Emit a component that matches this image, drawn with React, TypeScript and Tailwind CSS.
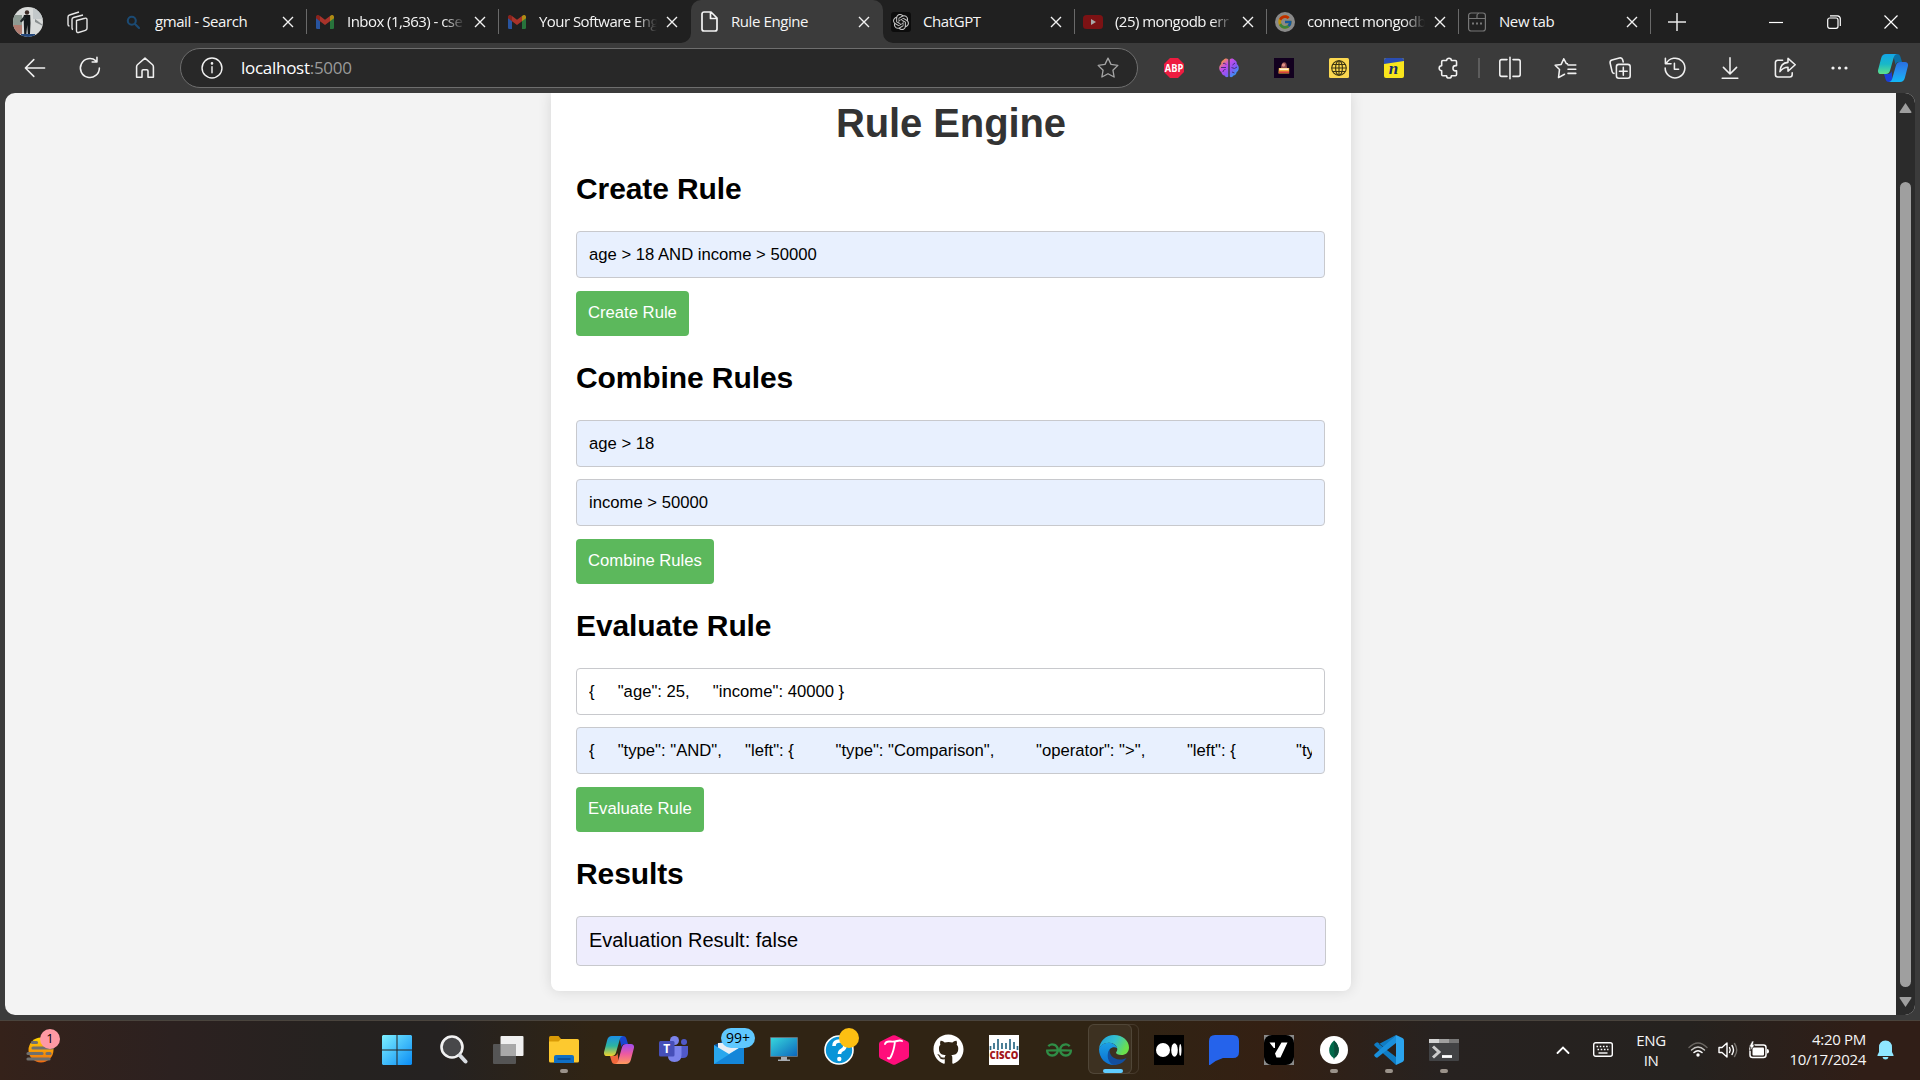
import React from "react";
import { FaGithub } from "react-icons/fa";
import { FcGoogle } from "react-icons/fc";
import { SiOpenai, SiGeeksforgeeks } from "react-icons/si";

type Kids = { children?: React.ReactNode };

/* ---------- shared drawing helper ---------- */
function Line({ size = 24, sw = 1.3, children, color = "#f0f0f0" }: Kids & { size?: number; sw?: number; color?: string }) {
  return (
    <svg width={size} height={size} viewBox="0 0 20 20" fill="none" stroke={color} strokeWidth={sw} strokeLinecap="round" strokeLinejoin="round" className="shrink-0">
      {children}
    </svg>
  );
}

/* ---------- tab strip ---------- */
function Gmail() {
  return (
    <svg width="18" height="14" viewBox="0 0 18 14">
      <path d="M0 1.5 4 4.5V14H1.2A1.2 1.2 0 0 1 0 12.8Z" fill="#28549f" />
      <path d="M18 1.5 14 4.5V14h2.8a1.2 1.2 0 0 0 1.2-1.2Z" fill="#28733c" />
      <path d="M4 1v5.2L9 10l5-3.8V1L9 4.8Z" fill="#a8332a" />
      <path d="M0 2C0 .2 1.8-.6 3.2.4L4 1v5.2L0 3.2Z" fill="#8a231c" />
      <path d="M18 2c0-1.8-1.8-2.6-3.2-1.6L14 1v5.2l4-3Z" fill="#b08a14" />
    </svg>
  );
}

const tabs: { title: string; icon: React.ReactNode; active?: boolean; sep?: boolean }[] = [
  {
    title: "gmail - Search",
    sep: true,
    icon: (
      <Line size={16} sw={2.6} color="#1b4a73">
        <circle cx="8.5" cy="8.5" r="5" />
        <path d="m12.5 12.5 5 5" />
      </Line>
    ),
  },
  { title: "Inbox (1,363) - cse", sep: true, icon: <Gmail /> },
  { title: "Your Software Eng", icon: <Gmail /> },
  {
    title: "Rule Engine",
    active: true,
    icon: (
      <svg width="17" height="21" viewBox="0 0 17 21" fill="none" stroke="#f4f4f4" strokeWidth="1.7" strokeLinejoin="round">
        <path d="M3 1h7l6 6v11a2 2 0 0 1-2 2H3a2 2 0 0 1-2-2V3a2 2 0 0 1 2-2ZM9.5 1v6.5H16" />
      </svg>
    ),
  },
  {
    title: "ChatGPT",
    sep: true,
    icon: (
      <span className="flex size-5 items-center justify-center rounded-[3px] bg-[#0c0c0c]">
        <SiOpenai size={16} color="#c4c4c4" />
      </span>
    ),
  },
  {
    title: "(25) mongodb err",
    sep: true,
    icon: (
      <svg width="20" height="14" viewBox="0 0 20 14">
        <rect width="20" height="14" rx="3.5" fill="#7c1214" />
        <path d="M8 4v6l5-3Z" fill="#a9a9a9" />
      </svg>
    ),
  },
  {
    title: "connect mongodb",
    sep: true,
    icon: (
      <span className="flex size-5 items-center justify-center rounded-full bg-[#8a8a8a]">
        <FcGoogle size={16} className="brightness-75" />
      </span>
    ),
  },
  {
    title: "New tab",
    sep: true,
    icon: (
      <svg width="18" height="20" viewBox="0 0 18 20" fill="none" stroke="#777" strokeWidth="1.2">
        <rect x=".6" y="1" width="16.8" height="18" rx="2.5" />
        <path d="M.6 6.500h8.400V3.500a2 2 0 0 1 2-2M9 6.500h8" />
        <path d="M4 11.500h2M8 11.500h2M12 11.500h2" strokeWidth="1.8" />
      </svg>
    ),
  },
];

function Tab({ title, icon, active, sep }: (typeof tabs)[number]) {
  return (
    <div className={"relative flex h-[43px] w-[192px] shrink-0 items-center " + (active ? "rounded-t-[10px] bg-[#3b3b3b]" : "")}>
      <div className="ml-[7px] flex w-[22px] shrink-0 items-center justify-center">{icon}</div>
      <div
        className={
          "ml-[11px] w-[118px] overflow-hidden whitespace-nowrap pb-[2px] text-[15px] leading-5 text-[#f5f5f5] " +
          (title.length > 14 ? "tracking-[-0.55px] [mask-image:linear-gradient(to_right,black_82%,transparent)]" : "tracking-[-0.42px]")
        }
      >
        {title}
      </div>
      <svg width="12" height="12" viewBox="0 0 12 12" stroke="#f2f2f2" strokeWidth="1.4" className="ml-[9px] shrink-0">
        <path d="m1 1 10 10M11 1 1 11" />
      </svg>
      {sep && <span className="absolute right-0 top-[9px] h-[25px] w-px bg-[#6a6a6a]" />}
      {active && (
        <>
          <svg width="10" height="10" className="absolute -left-[10px] bottom-0"><path d="M10 0v10H0A10 10 0 0 0 10 0" fill="#3b3b3b" /></svg>
          <svg width="10" height="10" className="absolute -right-[10px] bottom-0"><path d="M0 0v10h10A10 10 0 0 1 0 0" fill="#3b3b3b" /></svg>
        </>
      )}
    </div>
  );
}

function TabStrip() {
  return (
    <div className="flex h-[43px] items-center bg-[#202020]">
      <div className="flex w-[55px] shrink-0 justify-center">
        <svg width="30" height="30" viewBox="0 0 30 30">
          <defs><clipPath id="face"><circle cx="15" cy="15" r="15" /></clipPath></defs>
          <g clipPath="url(#face)">
            <rect width="30" height="30" fill="#d9dbda" />
            <path d="M0 8h9v12H0Z" fill="#8d9a92" />
            <path d="M0 18h9v9H0Z" fill="#b07c70" />
            <path d="M20 0h10v12H20Z" fill="#c3c8ca" />
            <path d="M22 12 30 18v1l-8-4Z" fill="#8a8f90" />
            <path d="M8 27h14v3H8Z" fill="#23477c" />
            <circle cx="14" cy="5.5" r="2.2" fill="#3b2b26" />
            <path d="M10.8 8h6.4l.3 8-.5 11h-2.200l-.6-9-.8 9h-2.200l-.4-11Z" fill="#15191b" />
            <path d="m11 9-4 5 1 1.500 5-4Z" fill="#20282a" />
          </g>
        </svg>
      </div>
      <div className="flex w-[60px] shrink-0 pl-[11px]">
        <svg width="24" height="24" viewBox="0 0 24 24" fill="none" stroke="#e6e6e6" strokeWidth="1.4" strokeLinejoin="round">
          <path d="m10.5 10.5 8.5-2.3a1.5 1.5 0 0 1 2 1.4v8.7a2 2 0 0 1-1.5 2l-7 2.2a1.5 1.5 0 0 1-2-1.4Z" />
          <path d="M7 19.5a1.5 1.5 0 0 1-1-1.5V9.5a2 2 0 0 1 1.500-2L17 5M3.5 16a1.5 1.5 0 0 1-1.500-1.500V7a2 2 0 0 1 1.500-2L13 2" />
        </svg>
      </div>
      {tabs.map((t) => <Tab key={t.title} {...t} />)}
      <div className="flex w-[105px] shrink-0 pl-[17px]">
        <svg width="18" height="18" stroke="#e8e8e8" strokeWidth="1.5"><path d="M9 0v18M0 9h18" /></svg>
      </div>
      <div className="flex flex-1 items-center justify-between pl-[13px] pr-[22px]">
        <svg width="14" height="14" stroke="#fff" strokeWidth="1.2"><path d="M0 7.5h14" /></svg>
        <svg width="14" height="14" fill="none" stroke="#fff" strokeWidth="1.2"><rect x=".7" y="3" width="10.3" height="10.3" rx="2" /><path d="M3 .8h7.500a3 3 0 0 1 2.800 2.800V11" /></svg>
        <svg width="14" height="14" stroke="#fff" strokeWidth="1.2"><path d="m.5.5 13 13M13.5.5l-13 13" /></svg>
      </div>
    </div>
  );
}

/* ---------- toolbar ---------- */
function Cell({ children }: Kids) {
  return <div className="flex w-[55px] shrink-0 items-center justify-center">{children}</div>;
}

function Toolbar() {
  return (
    <div className="flex h-[50px] items-center bg-[#3b3b3b] pl-[7px]">
      <Cell><Line><path d="M18 10H2.3M9 3l-7 7 7 7" /></Line></Cell>
      <Cell><Line><path d="M17.8 10a7.900 7.900 0 1 1-2.800-6M15.800 1v4h-4" /></Line></Cell>
      <Cell><Line><path d="M3 9c0-.8.3-1.400.9-1.900L10 1.800l6.100 5.300c.6.5.9 1.100.9 1.900v8.700h-4.500V12.500a1 1 0 0 0-1-1h-3a1 1 0 0 0-1 1v5.200H3Z" /></Line></Cell>
      <div className="ml-[8px] flex h-10 w-[958px] shrink-0 items-center rounded-full border border-[#6e6e6e] bg-[#282828] pl-[19px] pr-[17px]">
        <Line size={24} sw={1.2}><circle cx="10" cy="10" r="8.3" /><path d="M10 9v5" /><circle cx="10" cy="6.2" r=".5" fill="#fff" /></Line>
        <div className="ml-[17px] flex-1 text-[17px] leading-6 tracking-[-0.28px] text-white">localhost<span className="text-[#9a9a9a]">:5000</span></div>
        <Line size={24} sw={1.1} color="#a5a5a5"><path d="m10 1.800 2.500 5.200 5.700.8-4.100 4 1 5.700L10 14.800l-5.100 2.700 1-5.700-4.100-4 5.700-.8Z" /></Line>
      </div>
      <div className="ml-[8px] flex items-center">
        <Cell>
          <svg width="20" height="20" viewBox="0 0 20 20"><path d="M6 0h8l6 6v8l-6 6H6l-6-6V6Z" fill="#ee1c40" /><text x="10" y="14" textAnchor="middle" fontSize="11" fontWeight="700" fill="#fff" textLength="18.5" lengthAdjust="spacingAndGlyphs">ABP</text></svg>
        </Cell>
        <Cell>
          <svg width="20" height="20" viewBox="0 0 20 20">
            <defs><linearGradient id="brain" x1="0" y1="0" x2="1" y2="1"><stop offset=".1" stopColor="#ff9f2e" /><stop offset=".35" stopColor="#c44ee8" /><stop offset=".6" stopColor="#8b55f5" /><stop offset=".9" stopColor="#22a6f5" /></linearGradient></defs>
            <path d="M9.3 1.500C8 0 5.500.3 4.500 2 2.500 2.800 2 4.500 2.200 6 .5 7 0 9 .3 11c.3 1.600 1 2.500 2 3 .2 2 1.700 3.300 3.200 3.500 1 1.800 2.800 2.300 3.800 1Zm1.400 0c1.300-1.500 3.800-1.200 4.800.5 2 .8 2.500 2.500 2.300 4 1.700 1 2.200 3 1.900 5-.3 1.600-1 2.500-2 3-.2 2-1.700 3.300-3.200 3.500-1 1.800-2.800 2.300-3.800 1Z" fill="url(#brain)" />
            <path d="M4 5.500c1.500-.5 2.500 0 3 1M2 9.500h5M4 14c0-1.500 1-2.500 2.500-2.500M16 5l-2.500 2M12.500 9.500l3 1 2.500-1.500M13 14l2.500 1" fill="none" stroke="#4b2a80" strokeWidth="1" />
          </svg>
        </Cell>
        <Cell>
          <svg width="20" height="20"><rect width="20" height="20" fill="#12001f" /><path d="M7 10q0-4 2-5.500 3-1 3.500 1.500l.5 4Z" fill="#8b4a4e" /><circle cx="9.500" cy="7" r="1.7" fill="#df8f86" /><path d="M4.800 10h10.400v5.500H4.500Z" fill="#f2b43c" /><path d="M5 13.500h10v1.300H5Z" fill="#d0233d" /><path d="M5.500 10.500h9v1.300h-9Z" fill="#fff" /></svg>
        </Cell>
        <Cell>
          <svg width="20" height="20" fill="none" stroke="#3d3612" strokeWidth="1.1"><rect width="20" height="20" rx="1.5" fill="#fbd850" stroke="none" /><circle cx="10" cy="10" r="7.3" /><ellipse cx="10" cy="10" rx="3.4" ry="7.3" /><path d="M10 2.700v14.600M2.700 10h14.600M3.500 6.500h13M3.500 13.500h13" /></svg>
        </Cell>
        <Cell>
          <svg width="20" height="20"><rect width="20" height="20" rx="2" fill="#f9e51c" /><path d="M2 0h16a2 2 0 0 1 2 2v1L0 6V2a2 2 0 0 1 2-2Z" fill="#2a4db2" /><text x="9.500" y="15.500" textAnchor="middle" fontSize="17" fontStyle="italic" fontWeight="700" fill="#152a6d" className="font-['Liberation_Serif',serif]">n</text></svg>
        </Cell>
        <Cell><Line size={24}><path d="M8 3.800a2 2 0 0 1 4 0h3.300a1 1 0 0 1 1 1V8h-.8a2 2 0 0 0 0 4.400h.8v3a1 1 0 0 1-1 1H12a2 2 0 0 1-4 0H4.900a1 1 0 0 1-1-1V12.300a2.100 2.100 0 0 1 0-4.200V4.800a1 1 0 0 1 1-1Z" /></Line></Cell>
        <span className="ml-[2px] h-5 w-[2px] bg-[#5d5d5d]" />
        <div className="ml-[2px] flex">
          <Cell><Line size={24}><path d="M7.500 3H3a1.500 1.500 0 0 0-1.500 1.500v11A1.500 1.500 0 0 0 3 17h4.500M12.500 3H17a1.500 1.500 0 0 1 1.500 1.500v11A1.500 1.500 0 0 1 17 17h-4.500M10 1v18" /></Line></Cell>
          <Cell><Line size={24}><path d="m12 6.500-1-.3L9 2.300 6.800 7l-5 .7 3.600 3.600L4.600 18l5-2.800M12.500 7.500H19M12.500 11H19M12.500 14.500H19" /></Line></Cell>
          <Cell><Line size={24}><path d="M5 14.500c-.8 0-1.300-.5-1.500-1.300L1.800 6A2.200 2.200 0 0 1 3.300 3.400L9.500 1.700A2.200 2.200 0 0 1 12.200 3.200L12.700 5" /><rect x="7" y="7" width="11.5" height="11.5" rx="2" /><path d="M12.750 9.500v6.500M9.500 12.750H16" /></Line></Cell>
          <Cell><Line size={24}><path d="M2.600 6.500A8.200 8.200 0 1 1 1.800 10M2 1.800v4.700h4.700M9.500 6v5H13" /></Line></Cell>
          <Cell><Line size={24}><path d="M10 1.500v13M4.500 9.500 10 15l5.500-5.500M3.500 18.500h13" /></Line></Cell>
          <Cell><Line size={24}><path d="M8 3.500H4A2 2 0 0 0 2 5.500v10a2 2 0 0 0 2 2h10a2 2 0 0 0 2-2V14M12.500 2v3.300C8.500 5.500 6 8.500 5.800 13c1.700-2.500 3.700-3.700 6.700-3.700v3.400L18.500 7.300Z" /></Line></Cell>
          <Cell><svg width="17" height="4" fill="#f2f2f2"><circle cx="2" cy="2" r="1.6" /><circle cx="8.500" cy="2" r="1.6" /><circle cx="15" cy="2" r="1.6" /></svg></Cell>
        </div>
        <div className="flex w-[51px] shrink-0 justify-center"><Copilot blue /></div>
      </div>
    </div>
  );
}

function Copilot({ blue = false }: { blue?: boolean }) {
  const k = blue ? "b" : "c";
  return (
    <svg width="30" height="28" viewBox="0 0 30 28">
      <defs>
        <linearGradient id={k + "1"} x1="0" y1="0" x2="0" y2="1">
          <stop offset="0" stopColor={blue ? "#13a6e8" : "#1b8fe6"} />
          <stop offset=".5" stopColor={blue ? "#18b8c8" : "#2cb5a0"} />
          <stop offset="1" stopColor={blue ? "#5fe08a" : "#f4d32a"} />
        </linearGradient>
        <linearGradient id={k + "2"} x1="0" y1="0" x2="0" y2="1">
          <stop offset="0" stopColor={blue ? "#2870e0" : "#a04df0"} />
          <stop offset=".5" stopColor={blue ? "#2790ee" : "#ee5aa0"} />
          <stop offset="1" stopColor={blue ? "#12b8f5" : "#ff9a5c"} />
        </linearGradient>
      </defs>
      <path d="M15 0h4c2 0 3 1 3.500 3l1.500 5h-3c-2 0-3 1-3.500 3Z" fill={blue ? "#0b6fa5" : "#1846d0"} />
      <path d="M15 28h-4c-2 0-3-1-3.500-3L6 20h4c2 0 3-1 3.500-3Z" fill={blue ? "#1a3fd8" : "#f0683c"} />
      <path d="M8 0h11c-2 .5-2.800 1.800-3.400 4l-3.400 12c-.7 2.500-2 4-4.500 4H3c-2.500 0-3.500-2-2.800-4.500l3-11.500C3.900 1.500 5.500 0 8 0Z" fill={`url(#${k}1)`} />
      <path d="M22 28H11c2-.5 2.800-1.800 3.400-4l3.400-12c.7-2.500 2-4 4.500-4H27c2.500 0 3.500 2 2.800 4.500L26.800 24c-.7 2.500-2.300 4-4.800 4Z" fill={`url(#${k}2)`} />
    </svg>
  );
}

/* ---------- page ---------- */
function Field({ children, filled = true }: Kids & { filled?: boolean }) {
  return (
    <div className={"h-[47px] w-[749px] rounded-[4px] border border-[#c8c9cd] px-[12px] " + (filled ? "bg-[#e8f0fe]" : "bg-white")}>
      <div className="overflow-hidden whitespace-pre text-[16.67px] leading-[45px] text-black">{children}</div>
    </div>
  );
}

function Section({ title, action, children }: Kids & { title: string; action: string }) {
  return (
    <section className="mb-[25px]">
      <h2 className="text-[30px] font-bold leading-[34px] tracking-[-0.1px] text-black">{title}</h2>
      <div className="mt-[25px] flex flex-col items-start gap-3">
        {children}
        <button className="mt-px h-[45px] rounded-[4px] bg-[#5cb85c] px-[12px] pb-[3px] text-[16.67px] text-white">{action}</button>
      </div>
    </section>
  );
}

function Page() {
  return (
    <div className="flex h-[922px] w-[1910px] overflow-hidden rounded-[10px] bg-[#f3f3f3] font-['Liberation_Sans',Arial,sans-serif]">
      <div className="flex flex-1 items-start justify-center">
        <main className="ml-px h-[898px] w-[800px] rounded-b-[8px] bg-white px-[25px] pt-[8px] shadow-[0_0_14px_rgba(0,0,0,0.12)]">
          <h1 className="mb-[26.4px] text-center text-[40px] font-bold leading-[45px] tracking-[-0.1px] text-[#333]">Rule Engine</h1>
          <Section title="Create Rule" action="Create Rule">
            <Field>{"age > 18 AND income > 50000"}</Field>
          </Section>
          <Section title="Combine Rules" action="Combine Rules">
            <Field>{"age > 18"}</Field>
            <Field>{"income > 50000"}</Field>
          </Section>
          <Section title="Evaluate Rule" action="Evaluate Rule">
            <Field filled={false}>{'{     "age": 25,     "income": 40000 }'}</Field>
            <Field>{'{     "type": "AND",     "left": {         "type": "Comparison",         "operator": ">",         "left": {             "type": "Variable"'}</Field>
          </Section>
          <h2 className="text-[30px] font-bold leading-[34px] tracking-[-0.1px] text-black">Results</h2>
          <div className="mt-[25px] h-[50px] w-[750px] rounded-[4px] border border-[#c8c9cd] bg-[#eeedfd] px-[12px] text-[20px] leading-[46px] text-black">Evaluation Result: false</div>
        </main>
      </div>
      <div className="flex w-[19px] shrink-0 flex-col items-center bg-[#2b2b2b] pt-[10px]">
        <svg width="13" height="10" className="shrink-0"><path d="M6.500 0 12.500 9q.3 1-1 1H1.500Q.2 10 .5 9Z" fill="#9f9f9f" /></svg>
        <div className="mt-[69px] h-[805px] w-[11px] shrink-0 rounded-full bg-[#9f9f9f]" />
        <svg width="13" height="10" className="mt-[10px] shrink-0"><path d="M6.500 10 12.500 1q.3-1-1-1H1.500Q.2 0 .5 1Z" fill="#9f9f9f" /></svg>
      </div>
    </div>
  );
}

/* ---------- taskbar ---------- */
function TaskApp({ children, dot }: Kids & { dot?: boolean }) {
  return (
    <div className="relative flex h-[58px] w-[55px] shrink-0 items-center justify-center pb-px">
      {children}
      {dot && <span className="absolute bottom-[6px] left-[24px] h-1 w-2 rounded-full bg-[#9a928a]" />}
    </div>
  );
}

function Taskbar() {
  return (
    <div className="flex h-[60px] items-start border-t border-[#4a443d] bg-[linear-gradient(90deg,#35221a_0%,#2c2120_9%,#252220_18%,#252221_23%,#302414_31%,#302414_58%,#342013_66%,#272220_75%,#25221f_88%,#301e17_97%)]">
      <div className="relative h-[58px] w-[371px] shrink-0 pt-[11px]">
        <svg width="34" height="36" viewBox="0 0 34 36" className="ml-[26px]">
          <defs><linearGradient id="sun" x1="0" y1="0" x2="0" y2="1"><stop offset="0" stopColor="#ffd400" /><stop offset="1" stopColor="#f06a10" /></linearGradient></defs>
          <ellipse cx="15" cy="18" rx="12.5" ry="12.5" fill="url(#sun)" />
          <path d="M6.500 10.500h4M7 16h19M2 21.500h14M21 21.500h3M2 27h21" stroke="#70706e" strokeWidth="3.2" strokeLinecap="round" />
        </svg>
        <span className="absolute left-[40px] top-[8px] flex size-5 items-center justify-center rounded-full bg-[#ff99a4] text-[13px] text-black">1</span>
      </div>
      <TaskApp>
        <svg width="30" height="30" className="-translate-x-[2px]"><defs><linearGradient id="win" x1="0" y1="0" x2="1" y2="1"><stop offset="0" stopColor="#7df0ff" /><stop offset="1" stopColor="#0a8cf5" /></linearGradient></defs><path d="M1 0h13.500v14.500H0V1ZM15.500 0H29l1 1v13.500H15.500ZM0 15.500h14.500V30H1l-1-1ZM15.500 15.500H30V29l-1 1H15.500Z" fill="url(#win)" /></svg>
      </TaskApp>
      <TaskApp>
        <svg width="28" height="29" fill="none"><circle cx="12" cy="12" r="10.5" fill="#48484a" stroke="#f2f2f2" strokeWidth="2.6" /><path d="m20 20.500 5.500 6" stroke="#d9dde2" strokeWidth="4" strokeLinecap="round" /></svg>
      </TaskApp>
      <TaskApp>
        <svg width="31" height="28"><rect x="7.500" width="23" height="20" rx="1" fill="#f0f0f0" /><rect y="8" width="23" height="20" rx="1" fill="#555" /><path d="M7.500 8H23v12H7.500Z" fill="#a9a9a9" /></svg>
      </TaskApp>
      <TaskApp dot>
        <svg width="30" height="27"><path d="M0 1.500Q0 0 1.500 0h8L12 3v5H0Z" fill="#d99a06" /><path d="M0 5.500h9.500L12 3h16.500Q30 3 30 4.500V25q0 1.500-1.500 1.500h-27Q0 26.500 0 25Z" fill="#fdc92f" /><path d="M5 27v-6q0-2 2-2h16q2 0 2 2v6Z" fill="#0f6fc4" /><path d="M8.500 23h13" stroke="#07468c" strokeWidth="1.5" /></svg>
      </TaskApp>
      <TaskApp><Copilot /></TaskApp>
      <TaskApp>
        <svg width="30" height="27" viewBox="0 0 30 27"><circle cx="15.500" cy="4.500" r="4.5" fill="#7b83eb" /><circle cx="25" cy="6" r="3" fill="#5059c9" /><path d="M18 10h11v7q0 5-5 5h-6Z" fill="#5059c9" /><path d="M9 10h13.500v9q0 7-7 7T9 19Z" fill="#7b83eb" /><rect y="5" width="15.5" height="15.5" rx="1.5" fill="#464fb8" /><text x="7.75" y="17" textAnchor="middle" fontSize="12" fontWeight="700" fill="#fff">T</text></svg>
      </TaskApp>
      <TaskApp>
        <svg width="30" height="25" className="translate-y-[2px]"><path d="M0 6 15 0l15 6v6H0Z" fill="#0a5aa6" /><path d="M4 4h22v12H4Z" fill="#e8eef5" /><path d="M0 6l15 9 15-9v19H0Z" fill="#29a7ee" /><path d="M0 25 30 6v19Z" fill="#1486d9" /></svg>
        <span className="absolute left-[20px] top-[7px] flex h-5 w-[34px] items-center justify-center rounded-full bg-[#5fc8ff] text-[14px] leading-5 text-black">99+</span>
      </TaskApp>
      <TaskApp>
        <svg width="28" height="25"><defs><linearGradient id="pc" x1="0" y1="0" x2="1" y2="1"><stop offset="0" stopColor="#36d6dc" /><stop offset="1" stopColor="#0d67bd" /></linearGradient></defs><rect width="28" height="20" rx="1" fill="#657078" /><rect x="1" y="1" width="26" height="18" fill="url(#pc)" /><path d="M11 20h6v2.500h3V24H8v-1.500h3Z" fill="#a8adb2" /></svg>
      </TaskApp>
      <TaskApp>
        <svg width="30" height="30"><circle cx="15" cy="15" r="14" fill="#0a95d8" stroke="#fff" strokeWidth="1.6" /><path d="M10 11q0-5 5.500-5t5.500 4.500q0 3-3 4.500-2.500 1.200-2.500 4" fill="none" stroke="#fff" strokeWidth="3.6" /><circle cx="15.300" cy="24" r="2.2" fill="#fff" /></svg>
        <span className="absolute left-[28px] top-[7px] size-5 rounded-full bg-[#fdbf12]" />
      </TaskApp>
      <TaskApp>
        <svg width="30" height="30"><path d="M13.500.5q1.500-.7 3 0L28.500 6.500Q30 7.300 30 9v12q0 1.700-1.500 2.500L16.500 29.500q-1.500.7-3 0L1.500 23.500Q0 22.700 0 21V9q0-1.700 1.500-2.500Z" fill="#ff0d7b" /><path d="M6 9q1-3 5-2.500t7-.5 5 0M16 6.500q-1 9-4 15-1.500 3-3 1.500" fill="none" stroke="#fff" strokeWidth="1.9" strokeLinecap="round" /></svg>
      </TaskApp>
      <TaskApp><FaGithub size={31} color="#fff" /></TaskApp>
      <TaskApp>
        <svg width="30" height="30"><rect width="30" height="30" fill="#fff" /><path d="M1.500 11v4M5 8v6M9 4v11M13 8v6M17 8v6M21 4v11M25 7v7M28.500 11v4" stroke="#2c6a85" strokeWidth="1.7" /><text x="15" y="24.300" textAnchor="middle" fontSize="10.500" fontWeight="800" fill="#a3161a" textLength="29" lengthAdjust="spacingAndGlyphs">CISCO</text></svg>
      </TaskApp>
      <TaskApp><SiGeeksforgeeks size={26} color="#2f8d46" /></TaskApp>
      <TaskApp>
        <span className="absolute left-[3px] top-[3px] h-[50px] w-[50px] rounded-[6px] border border-white/10" />
        <span className="absolute left-[2px] top-[3px] h-[50px] w-[44px] rounded-[6px] border border-white/10 bg-[#3d3121]" />
        <svg width="30" height="30" viewBox="0 0 30 30" className="relative">
          <defs>
            <linearGradient id="e1" x1="0" y1="0" x2="1" y2=".4"><stop offset="0" stopColor="#1b9de2" /><stop offset=".55" stopColor="#35c1cf" /><stop offset="1" stopColor="#6be04c" /></linearGradient>
            <linearGradient id="e2" x1="0" y1="0" x2="0" y2="1"><stop offset="0" stopColor="#1ba0e6" /><stop offset="1" stopColor="#0c6fd0" /></linearGradient>
          </defs>
          <path d="M0 14C.8 6 7 0 15 0c9 0 15 6 15 12.500 0 5-3.500 7.500-7.500 7.500-3.500 0-5.500-1-5.500-2.200 0-.8 1.300-1.300 1.300-3.500C18.300 11 15 7.700 10 7.700 5 7.700 1.500 10.500 0 14Z" fill="url(#e1)" />
          <path d="M0 14C1.200 10 5 7.700 10 7.700c4 0 7.500 2.500 8.300 5.500-2-1.500-5.300-1.500-7.300.8-3.500 4.500-.5 11 7 14.500-1 .8-2 1.500-3 1.500C6.500 30 0 23 0 14Z" fill="url(#e2)" />
          <path d="M11 14c-1.500 5 3 10.500 10 10.500 3 0 5-.7 6.500-1.500C25 27.500 20 30 15 30c-6-1-8.500-11-4-16Z" fill="#124f9e" />
        </svg>
        <span className="absolute bottom-[6px] left-[17px] h-1 w-5 rounded-full bg-[#60cdff]" />
      </TaskApp>
      <TaskApp>
        <svg width="30" height="30" fill="#fff"><rect width="30" height="30" fill="#000" /><circle cx="9" cy="15" r="7" /><ellipse cx="20.500" cy="15" rx="3.3" ry="6.7" /><ellipse cx="26.300" cy="15" rx="1.2" ry="6" /></svg>
      </TaskApp>
      <TaskApp>
        <svg width="30" height="30"><path d="M6 0h18q6 0 6 6v11q0 6-6 6H14Q7 25 1 30H0V6Q0 0 6 0Z" fill="#2563eb" /></svg>
      </TaskApp>
      <TaskApp>
        <svg width="30" height="30"><rect width="30" height="30" fill="#8a8a8a" /><rect width="30" height="30" rx="8" fill="#000" /><path d="M5.500 7.500H11V13H9.800ZM17.500 7.500h6l-7 15H12.500L11 18.500Z" fill="#fff" /></svg>
      </TaskApp>
      <TaskApp dot>
        <svg width="30" height="30"><circle cx="15" cy="15" r="14" fill="#fff" /><path d="M15 5.500q5 4.500 4.800 10Q19.500 20 15.500 23l-.5 2-.5-2q-4.200-3-4.300-7.500Q10 10 15 5.500Z" fill="#00694a" /><path d="M15 5.500q5 4.500 4.800 10Q19.500 20 15.500 23Z" fill="#0b4c3a" /></svg>
      </TaskApp>
      <TaskApp dot>
        <svg width="30" height="30"><path d="M22 0 9.500 12 4 7.500Q3 7 2 7.700L.7 8.800q-1 1 0 2L22 30v-8L5 9Z" fill="#0f7cc4" /><path d="M22 0v8L3.500 22.500Q2.500 23 1.700 22.200l-1-1q-1-1 0-2Z" fill="#1a90dc" /><path d="M22 0 28.500 3Q30 3.700 30 5.500v19q0 1.800-1.500 2.500L22 30Z" fill="#2ba4ee" /></svg>
      </TaskApp>
      <TaskApp dot>
        <svg width="30" height="22"><rect width="30" height="22" rx="1" fill="#424345" /><path d="M0 0h10v4H0Z" fill="#d4d4d4" /><path d="M10 0h10v4H10Z" fill="#a0a0a0" /><path d="M20 0h10v4H20Z" fill="#777" /><path d="m4 7.500 6 5.500-6 5.500" fill="none" stroke="#ccc" strokeWidth="3" /><path d="M13 17.500h10" stroke="#fff" strokeWidth="2.8" /></svg>
      </TaskApp>

      <div className="flex h-[57px] flex-1 items-center text-[#f5f5f5]">
        <svg width="14" height="8" fill="none" stroke="#fff" strokeWidth="1.8" strokeLinecap="round" className="ml-[85px]"><path d="m1.500 7 5.500-5.500L12.500 7" /></svg>
        <svg width="20" height="15" fill="none" stroke="#fff" strokeWidth="1.4" className="ml-[23px]"><rect x=".7" y=".7" width="18.6" height="13.6" rx="2" /><path d="M3.500 4.500h13M4.500 7.500h11" strokeWidth="1.6" strokeDasharray="1.6 1.6" /><path d="M5.500 11h9" /></svg>
        <div className="ml-[16px] w-[44px] text-center text-[15px] leading-5 tracking-[-0.4px]">ENG<br />IN</div>
        <svg width="20" height="15" fill="none" strokeWidth="1.4" strokeLinecap="round" className="ml-[15px]"><path d="M1 5.500Q10-3.500 19 5.500" stroke="#6b6762" /><path d="M3.500 8q6.500-6 13 0" stroke="#c9c7c4" /><path d="M6 10.500q4-3.500 8 0" stroke="#fff" strokeWidth="1.6" /><circle cx="10" cy="13" r="1.7" fill="#fff" /></svg>
        <svg width="20" height="18" fill="none" stroke="#fff" strokeWidth="1.4" strokeLinecap="round" strokeLinejoin="round" className="ml-[10px]"><path d="M1 6.500h3L9 2v14l-5-4.500H1Z" /><path d="M11.500 6.500q1.500 2.500 0 5M14 4.500q3 4.500 0 9" /><path d="M16.500 2.500q4.500 6.500 0 13" stroke="#75716c" /></svg>
        <svg width="20" height="18" fill="none" className="ml-[11px]"><rect x="1" y="4" width="16" height="12.5" rx="2.5" stroke="#fff" strokeWidth="1.5" /><rect x="3.500" y="6.500" width="11.5" height="8" rx="1" fill="#fff" /><path d="M18 8q2 0 2 2.200T18 12.500Z" fill="#fff" /><path d="M3 0 0 6h2L1 10l5-6H4L5 0Z" fill="#fff" stroke="#28221e" strokeWidth=".7" /></svg>
        <div className="ml-[16px] flex w-[81px] flex-col items-end whitespace-nowrap pb-px text-[15px] leading-5 tracking-[-0.3px]"><span>4:20 PM</span><span>10/17/2024</span></div>
        <svg width="17" height="20" fill="#8fe6ff" className="ml-[11px]"><path d="M8.500.5Q15 .8 15 7.500V12l1.500 3v1H.5v-1L2 12V7.500Q2 .8 8.500.5ZM5.500 17h6q-.5 2.500-3 2.500t-3-2.500Z" /></svg>
      </div>
    </div>
  );
}

export default function App() {
  return (
    <div className="flex h-[1080px] w-[1920px] flex-col overflow-hidden bg-[#3b3b3b] font-['Open_Sans','Noto_Sans',sans-serif]">
      <TabStrip />
      <Toolbar />
      <div className="mb-[5px] pl-[5px]"><Page /></div>
      <Taskbar />
    </div>
  );
}
